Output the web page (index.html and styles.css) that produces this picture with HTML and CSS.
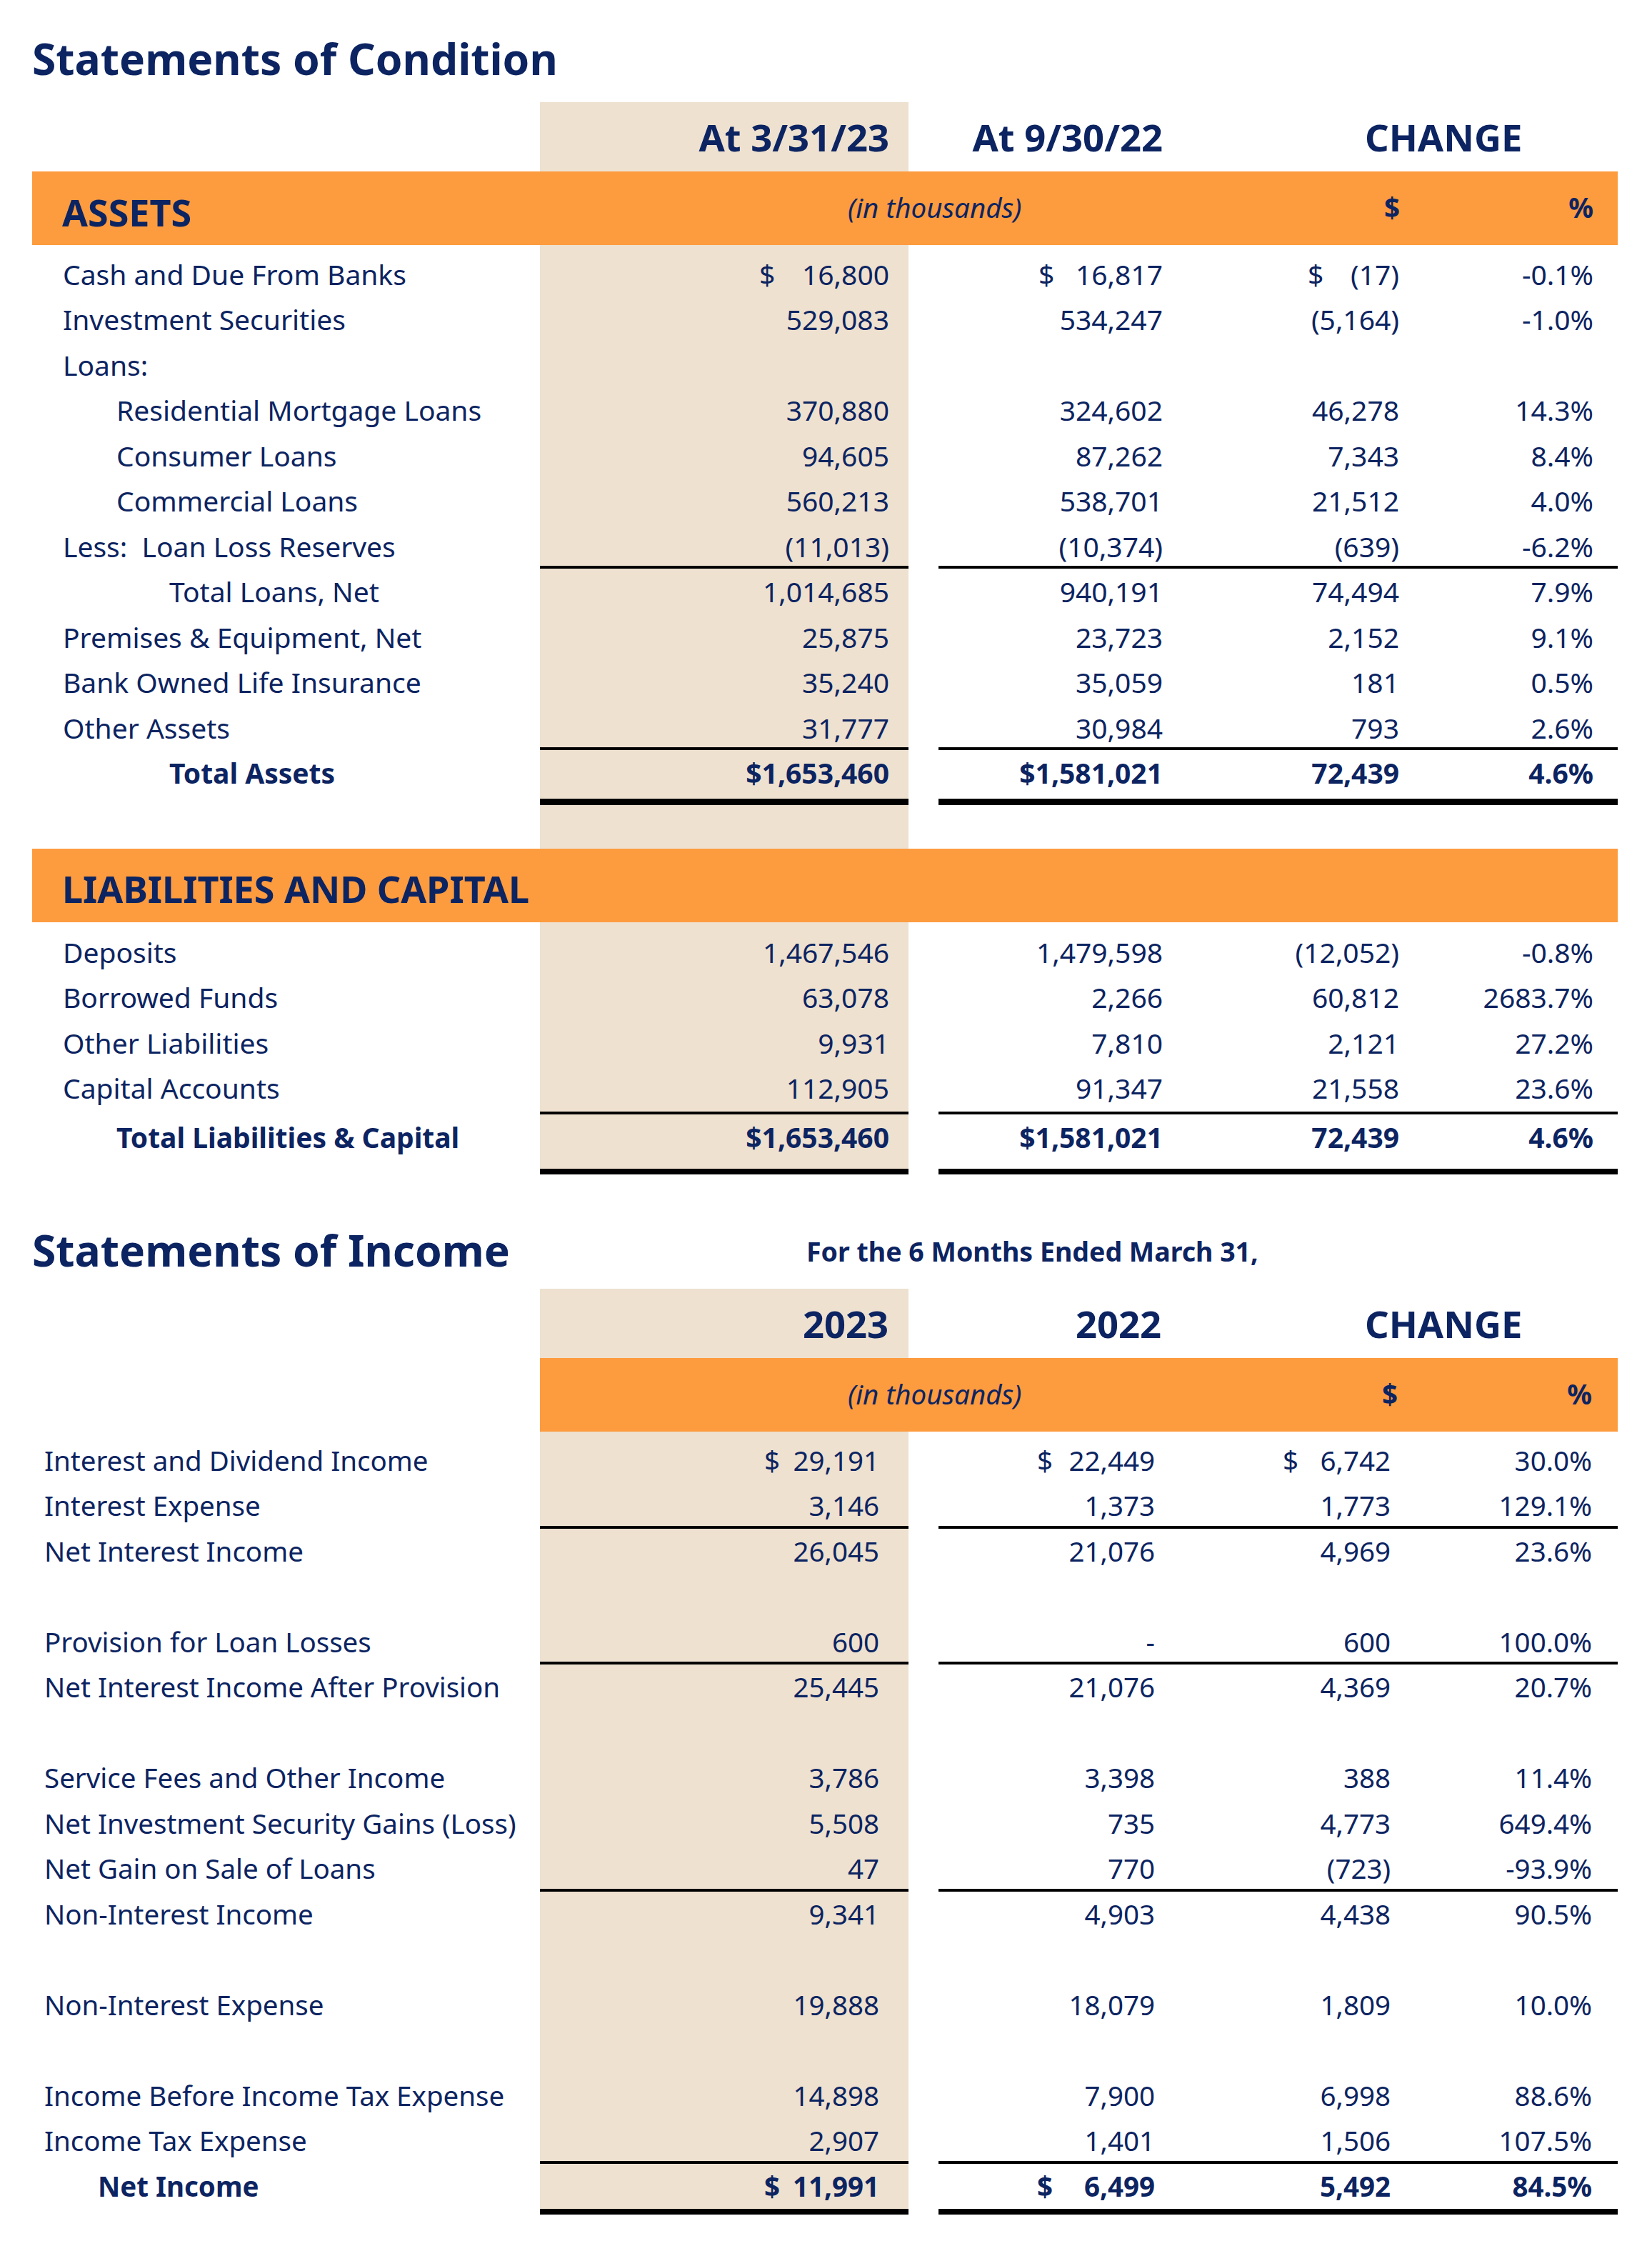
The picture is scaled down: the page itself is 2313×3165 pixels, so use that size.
FILE: index.html
```html
<!DOCTYPE html>
<html lang="en">
<head>
<meta charset="utf-8">
<title>Statements of Condition and Income</title>
<link rel="stylesheet" href="styles.css">
</head>
<body>
<div class="page">

  <section class="cond">
    <div class="title-row">
      <h1 class="title">Statements of Condition</h1>
    </div>

    <div class="grid head">
      <div class="lbl"></div>
      <div class="c1">At 3/31/23</div>
      <div class="gap"></div>
      <div class="c2">At 9/30/22</div>
      <div class="c34">CHANGE</div>
    </div>

    <div class="grid band">
      <div class="lbl sec">ASSETS</div>
      <div class="c12 note">(in thousands)</div>
      <div class="c3 sym">$</div>
      <div class="c4 sym">%</div>
    </div>

    <div class="grid sp sp-top"><div class="lbl"></div><div class="c1"></div></div>

    <div class="grid r">
      <div class="lbl">Cash and Due From Banks</div>
      <div class="c1 dl d1"><span>$</span><span>16,800</span></div>
      <div class="gap"></div>
      <div class="c2 dl d2"><span>$</span><span>16,817</span></div>
      <div class="c3 dl d3"><span>$</span><span>(17)</span></div>
      <div class="c4">-0.1%</div>
    </div>
    <div class="grid r">
      <div class="lbl">Investment Securities</div>
      <div class="c1">529,083</div><div class="gap"></div>
      <div class="c2">534,247</div><div class="c3">(5,164)</div><div class="c4">-1.0%</div>
    </div>
    <div class="grid r">
      <div class="lbl">Loans:</div>
      <div class="c1"></div><div class="gap"></div>
      <div class="c2"></div><div class="c3"></div><div class="c4"></div>
    </div>
    <div class="grid r">
      <div class="lbl in1">Residential Mortgage Loans</div>
      <div class="c1">370,880</div><div class="gap"></div>
      <div class="c2">324,602</div><div class="c3">46,278</div><div class="c4">14.3%</div>
    </div>
    <div class="grid r">
      <div class="lbl in1">Consumer Loans</div>
      <div class="c1">94,605</div><div class="gap"></div>
      <div class="c2">87,262</div><div class="c3">7,343</div><div class="c4">8.4%</div>
    </div>
    <div class="grid r">
      <div class="lbl in1">Commercial Loans</div>
      <div class="c1">560,213</div><div class="gap"></div>
      <div class="c2">538,701</div><div class="c3">21,512</div><div class="c4">4.0%</div>
    </div>
    <div class="grid r rule">
      <div class="lbl">Less:&nbsp; Loan Loss Reserves</div>
      <div class="c1">(11,013)</div><div class="gap"></div>
      <div class="c2">(10,374)</div><div class="c3">(639)</div><div class="c4">-6.2%</div>
    </div>
    <div class="grid r">
      <div class="lbl in2">Total Loans, Net</div>
      <div class="c1">1,014,685</div><div class="gap"></div>
      <div class="c2">940,191</div><div class="c3">74,494</div><div class="c4">7.9%</div>
    </div>
    <div class="grid r">
      <div class="lbl">Premises &amp; Equipment, Net</div>
      <div class="c1">25,875</div><div class="gap"></div>
      <div class="c2">23,723</div><div class="c3">2,152</div><div class="c4">9.1%</div>
    </div>
    <div class="grid r">
      <div class="lbl">Bank Owned Life Insurance</div>
      <div class="c1">35,240</div><div class="gap"></div>
      <div class="c2">35,059</div><div class="c3">181</div><div class="c4">0.5%</div>
    </div>
    <div class="grid r rule">
      <div class="lbl">Other Assets</div>
      <div class="c1">31,777</div><div class="gap"></div>
      <div class="c2">30,984</div><div class="c3">793</div><div class="c4">2.6%</div>
    </div>
    <div class="grid r tot tot-assets">
      <div class="lbl in2">Total Assets</div>
      <div class="c1">$1,653,460</div><div class="gap"></div>
      <div class="c2">$1,581,021</div><div class="c3">72,439</div><div class="c4">4.6%</div>
    </div>

    <div class="grid sp sp-mid"><div class="lbl"></div><div class="c1"></div></div>

    <div class="grid band">
      <div class="lbl sec sec-l">LIABILITIES AND CAPITAL</div>
      <div class="c12"></div>
      <div class="c3"></div>
      <div class="c4"></div>
    </div>

    <div class="grid sp sp-top2"><div class="lbl"></div><div class="c1"></div></div>

    <div class="grid r">
      <div class="lbl">Deposits</div>
      <div class="c1">1,467,546</div><div class="gap"></div>
      <div class="c2">1,479,598</div><div class="c3">(12,052)</div><div class="c4">-0.8%</div>
    </div>
    <div class="grid r">
      <div class="lbl">Borrowed Funds</div>
      <div class="c1">63,078</div><div class="gap"></div>
      <div class="c2">2,266</div><div class="c3">60,812</div><div class="c4">2683.7%</div>
    </div>
    <div class="grid r">
      <div class="lbl">Other Liabilities</div>
      <div class="c1">9,931</div><div class="gap"></div>
      <div class="c2">7,810</div><div class="c3">2,121</div><div class="c4">27.2%</div>
    </div>
    <div class="grid r rule tall">
      <div class="lbl">Capital Accounts</div>
      <div class="c1">112,905</div><div class="gap"></div>
      <div class="c2">91,347</div><div class="c3">21,558</div><div class="c4">23.6%</div>
    </div>
    <div class="grid r tot tot-liab">
      <div class="lbl in1">Total Liabilities &amp; Capital</div>
      <div class="c1">$1,653,460</div><div class="gap"></div>
      <div class="c2">$1,581,021</div><div class="c3">72,439</div><div class="c4">4.6%</div>
    </div>
  </section>

  <section class="inc">
    <div class="grid title-row2">
      <h2 class="title">Statements of Income</h2>
      <div class="sub">For the 6 Months Ended March 31,</div>
    </div>

    <div class="grid head">
      <div class="lbl"></div>
      <div class="c1">2023</div>
      <div class="gap"></div>
      <div class="c2">2022</div>
      <div class="c34">CHANGE</div>
    </div>

    <div class="grid band">
      <div class="lbl blank"></div>
      <div class="c12 note">(in thousands)</div>
      <div class="c3 sym">$</div>
      <div class="c4 sym">%</div>
    </div>

    <div class="grid sp sp-top"><div class="lbl"></div><div class="c1"></div></div>

    <div class="grid r">
      <div class="lbl">Interest and Dividend Income</div>
      <div class="c1 dl d1"><span>$</span><span>29,191</span></div>
      <div class="gap"></div>
      <div class="c2 dl d2"><span>$</span><span>22,449</span></div>
      <div class="c3 dl d3"><span>$</span><span>6,742</span></div>
      <div class="c4">30.0%</div>
    </div>
    <div class="grid r rule">
      <div class="lbl">Interest Expense</div>
      <div class="c1">3,146</div><div class="gap"></div>
      <div class="c2">1,373</div><div class="c3">1,773</div><div class="c4">129.1%</div>
    </div>
    <div class="grid r">
      <div class="lbl">Net Interest Income</div>
      <div class="c1">26,045</div><div class="gap"></div>
      <div class="c2">21,076</div><div class="c3">4,969</div><div class="c4">23.6%</div>
    </div>
    <div class="grid r">
      <div class="lbl"></div><div class="c1"></div><div class="gap"></div>
      <div class="c2"></div><div class="c3"></div><div class="c4"></div>
    </div>
    <div class="grid r rule">
      <div class="lbl">Provision for Loan Losses</div>
      <div class="c1">600</div><div class="gap"></div>
      <div class="c2">-</div><div class="c3">600</div><div class="c4">100.0%</div>
    </div>
    <div class="grid r">
      <div class="lbl">Net Interest Income After Provision</div>
      <div class="c1">25,445</div><div class="gap"></div>
      <div class="c2">21,076</div><div class="c3">4,369</div><div class="c4">20.7%</div>
    </div>
    <div class="grid r">
      <div class="lbl"></div><div class="c1"></div><div class="gap"></div>
      <div class="c2"></div><div class="c3"></div><div class="c4"></div>
    </div>
    <div class="grid r">
      <div class="lbl">Service Fees and Other Income</div>
      <div class="c1">3,786</div><div class="gap"></div>
      <div class="c2">3,398</div><div class="c3">388</div><div class="c4">11.4%</div>
    </div>
    <div class="grid r">
      <div class="lbl">Net Investment Security Gains (Loss)</div>
      <div class="c1">5,508</div><div class="gap"></div>
      <div class="c2">735</div><div class="c3">4,773</div><div class="c4">649.4%</div>
    </div>
    <div class="grid r rule">
      <div class="lbl">Net Gain on Sale of Loans</div>
      <div class="c1">47</div><div class="gap"></div>
      <div class="c2">770</div><div class="c3">(723)</div><div class="c4">-93.9%</div>
    </div>
    <div class="grid r">
      <div class="lbl">Non-Interest Income</div>
      <div class="c1">9,341</div><div class="gap"></div>
      <div class="c2">4,903</div><div class="c3">4,438</div><div class="c4">90.5%</div>
    </div>
    <div class="grid r">
      <div class="lbl"></div><div class="c1"></div><div class="gap"></div>
      <div class="c2"></div><div class="c3"></div><div class="c4"></div>
    </div>
    <div class="grid r">
      <div class="lbl">Non-Interest Expense</div>
      <div class="c1">19,888</div><div class="gap"></div>
      <div class="c2">18,079</div><div class="c3">1,809</div><div class="c4">10.0%</div>
    </div>
    <div class="grid r">
      <div class="lbl"></div><div class="c1"></div><div class="gap"></div>
      <div class="c2"></div><div class="c3"></div><div class="c4"></div>
    </div>
    <div class="grid r">
      <div class="lbl">Income Before Income Tax Expense</div>
      <div class="c1">14,898</div><div class="gap"></div>
      <div class="c2">7,900</div><div class="c3">6,998</div><div class="c4">88.6%</div>
    </div>
    <div class="grid r rule">
      <div class="lbl">Income Tax Expense</div>
      <div class="c1">2,907</div><div class="gap"></div>
      <div class="c2">1,401</div><div class="c3">1,506</div><div class="c4">107.5%</div>
    </div>
    <div class="grid r tot tot-inc">
      <div class="lbl in2">Net Income</div>
      <div class="c1 dl d1"><span>$</span><span>11,991</span></div>
      <div class="gap"></div>
      <div class="c2 dl d2n"><span>$</span><span>6,499</span></div>
      <div class="c3">5,492</div>
      <div class="c4">84.5%</div>
    </div>
  </section>

</div>
</body>
</html>
```

FILE: styles.css
```css
* {
  box-sizing: border-box;
  margin: 0;
  padding: 0;
}

html, body {
  background: #ffffff;
}

body {
  margin: 0;
  font-family: "Noto Sans", "Open Sans", "Liberation Sans", sans-serif;
  color: #0c2461;
}

.page {
  width: 2313px;
  padding-left: 45px;
}

.grid {
  display: grid;
  grid-template-columns: 711px 516px 42px 341px 335px 275px;
}

/* Titles */
.title-row {
  height: 143px;
  padding-top: 52px;
}

.title {
  font-size: 60.5px;
  line-height: 60px;
  font-weight: 700;
  white-space: nowrap;
}

.title-row2 {
  height: 160.5px;
}

.title-row2 .title {
  padding-top: 76px;
}

.title-row2 .sub {
  grid-column: 2 / 7;
  padding-top: 90px;
  padding-left: 373px;
  font-size: 37.5px;
  line-height: 36px;
  font-weight: 700;
  white-space: nowrap;
}

/* Beige column */
.c1 {
  background: #eee1d0;
}

/* Column header row */
.head > div {
  height: 97px;
  padding-top: 23px;
  font-size: 52.5px;
  line-height: 52px;
  font-weight: 700;
  white-space: nowrap;
}

.head .c1,
.head .c2 {
  text-align: right;
}

.cond .head .c1 { padding-right: 27px; }
.cond .head .c2 { padding-right: 27px; }
.inc .head .c1 { padding-right: 28px; }
.inc .head .c2 { padding-right: 29px; }

.head .c34 {
  grid-column: 5 / 7;
  padding-left: 256px;
}

/* Orange section band */
.band {
  height: 103px;
}

.band > div {
  background: #fd9b3f;
  padding-top: 31px;
  font-size: 38.5px;
  line-height: 38px;
  white-space: nowrap;
}

.band > .blank {
  background: transparent;
}

.band .sec {
  font-size: 52px;
  line-height: 52px;
  font-weight: 700;
  padding-left: 42px;
}

.band .sec-l {
  padding-left: 42px;
  padding-top: 30px;
}

.band .c12 {
  grid-column: 2 / 5;
}

.band .note {
  font-style: italic;
  padding-left: 431px;
}

.band .sym {
  font-weight: 700;
  text-align: right;
}

.cond .band .c3 { padding-right: 30px; }
.cond .band .c4 { padding-right: 34px; }
.inc .band .c3 { padding-right: 33px; }
.inc .band .c4 { padding-right: 36px; }

/* Spacer rows keep the beige column running */
.sp-top { height: 8.5px; }
.sp-top2 { height: 9.5px; }
.sp-mid { height: 61.5px; }

/* Data rows */
.r > div {
  height: 63.5px;
  font-size: 39px;
  line-height: 63.5px;
  white-space: nowrap;
}

.inc .r > div {
  font-size: 38.5px;
}

.r .c1,
.r .c2,
.r .c3,
.r .c4 {
  text-align: right;
}

.cond .r .lbl { padding-left: 43px; }
.cond .r .lbl.in1 { padding-left: 118px; }
.cond .r .lbl.in2 { padding-left: 192px; }

.inc .r .lbl { padding-left: 17px; }
.inc .r .lbl.in2 { padding-left: 92px; }

.cond .r .c1 { padding-right: 27px; }
.cond .r .c2 { padding-right: 27px; }
.cond .r .c3 { padding-right: 31px; }
.cond .r .c4 { padding-right: 34px; }

.inc .r .c1 { padding-right: 41px; }
.inc .r .c2 { padding-right: 38px; }
.inc .r .c3 { padding-right: 43px; }
.inc .r .c4 { padding-right: 36px; }

/* Dollar-sign cells: sign at the left, figure at the right */
.r .dl {
  display: flex;
  justify-content: space-between;
}

.cond .r .d1 { padding-left: 307px; }
.cond .r .d2 { padding-left: 140px; }
.cond .r .d3 { padding-left: 176px; }

.inc .r .d1 { padding-left: 314px; }
.inc .r .d2 { padding-left: 138px; }
.inc .r .d2n { padding-left: 138px; }
.inc .r .d3 { padding-left: 141px; }

/* Rules */
.rule .c1,
.rule .c2,
.rule .c3,
.rule .c4 {
  border-bottom: 4px solid #000;
}

.r.tall > div {
  height: 68.5px;
}

.tot > div {
  font-weight: 700;
}

.tot .c1,
.tot .c2,
.tot .c3,
.tot .c4 {
  border-bottom: 9px solid #000;
}

.r.tot-assets > div { height: 76.5px; }
.r.tot-liab > div { height: 84px; border-bottom-width: 8px; }
.r.tot-liab > .lbl,
.r.tot-liab > .gap { border-bottom: 0; }
.r.tot-inc > div { height: 71.5px; }
.r.tot-inc .c1,
.r.tot-inc .c2,
.r.tot-inc .c3,
.r.tot-inc .c4 { border-bottom-width: 8px; }
```
